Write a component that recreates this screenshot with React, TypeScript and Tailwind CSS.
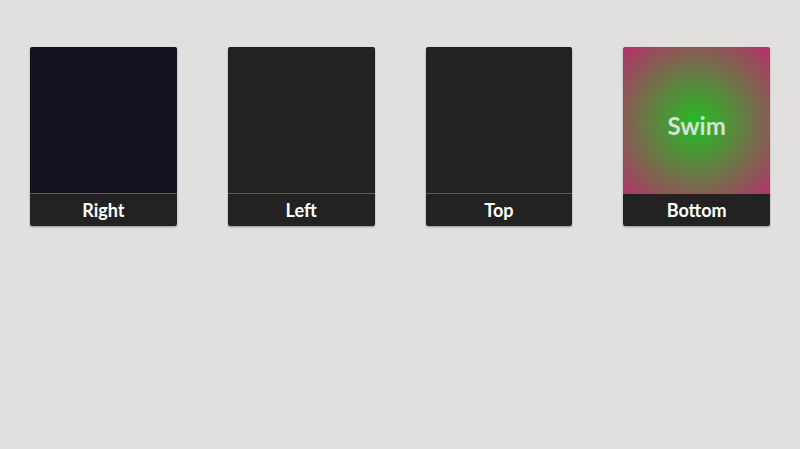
import React, { FC } from 'react'

const cards = [
  { label: 'Right', top: 'bg-[#13131f]', line: true },
  { label: 'Left', top: 'bg-[#222222]', line: true },
  { label: 'Top', top: 'bg-[#222222]', line: true },
  { label: 'Bottom', top: 'swim', line: false },
]

const App: FC = () => {
  return (
    <div className="min-h-[449px] w-full bg-[#e2e0df] px-[30px] pt-[47px] font-['Lato','Liberation_Sans',sans-serif]">
      <div className="grid grid-cols-4 gap-[51px]">
        {cards.map(({ label, top, line }) => (
          <div className="flex flex-col overflow-hidden rounded-[2px] shadow-[0_1px_2px_rgba(0,0,0,0.35)]" key={label}>
            {top === 'swim' ? (
              <div className="flex h-[147px] items-center justify-center bg-[radial-gradient(circle_at_50%_52%,#22bd22_0%,#b62f6b_100%)] pt-[10px]">
                <span className="text-[24px] font-bold text-[#dcdfd8]">Swim</span>
              </div>
            ) : (
              <div className={`h-[146px] ${top}`} />
            )}
            {line && <div className="h-px bg-[#5a5a5a]" />}
            <div className="flex h-[32px] items-center justify-center bg-[#222222] text-[18px] font-bold text-white">
              {label}
            </div>
          </div>
        ))}
      </div>
    </div>
  )
}

export default App
